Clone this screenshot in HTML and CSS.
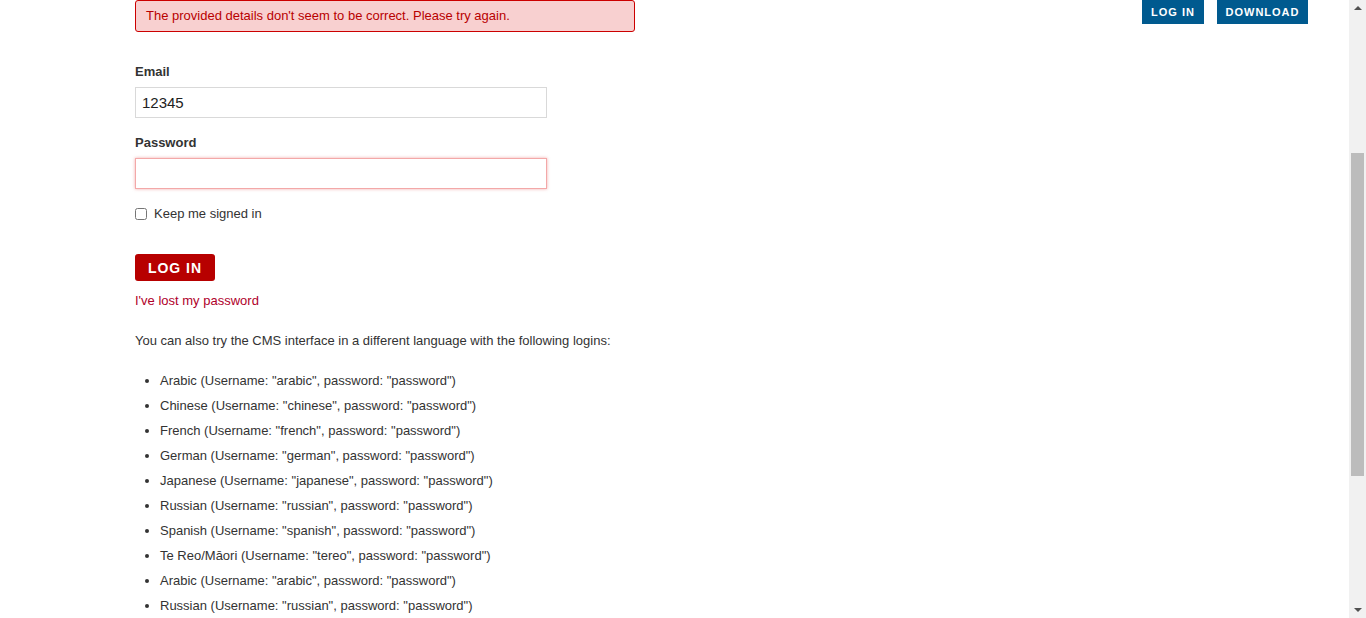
FILE: index.html
```html
<!DOCTYPE html>
<html lang="en">
<head>
<meta charset="utf-8">
<title>Log in</title>
<link rel="stylesheet" href="styles.css">
</head>
<body>
<div class="viewport">
  <div class="page">
    <main class="content">
      <div class="alert">The provided details don't seem to be correct. Please try again.</div>
      <form class="login">
        <label class="field-label" for="email">Email</label>
        <input class="text-input" id="email" type="text" value="12345">
        <label class="field-label" for="pw">Password</label>
        <input class="text-input error" id="pw" type="password">
        <label class="remember"><input type="checkbox" class="check"><span>Keep me signed in</span></label>
        <button type="button" class="submit">LOG IN</button>
        <a class="lost" href="#">I've lost my password</a>
      </form>
      <p class="intro">You can also try the CMS interface in a different language with the following logins:</p>
      <ul class="logins">
        <li>Arabic (Username: "arabic", password: "password")</li>
        <li>Chinese (Username: "chinese", password: "password")</li>
        <li>French (Username: "french", password: "password")</li>
        <li>German (Username: "german", password: "password")</li>
        <li>Japanese (Username: "japanese", password: "password")</li>
        <li>Russian (Username: "russian", password: "password")</li>
        <li>Spanish (Username: "spanish", password: "password")</li>
        <li>Te Reo/Māori (Username: "tereo", password: "password")</li>
        <li>Arabic (Username: "arabic", password: "password")</li>
        <li>Russian (Username: "russian", password: "password")</li>
      </ul>
    </main>
    <nav class="topnav">
      <a class="navbtn login-btn" href="#">LOG IN</a>
      <a class="navbtn download-btn" href="#">DOWNLOAD</a>
    </nav>
  </div>
  <div class="scrollbar">
    <span class="arrow up"></span>
    <div class="track"><div class="thumb"></div></div>
    <span class="arrow down"></span>
  </div>
</div>
</body>
</html>
```

FILE: styles.css
```css
html, body {
  margin: 0;
  padding: 0;
  height: 100%;
  overflow: hidden;
  background: #fff;
}
body {
  font-family: "Liberation Sans", Arial, sans-serif;
  font-size: 13px;
  color: #333;
}
.viewport {
  display: flex;
  height: 618px;
}
.page {
  flex: 1;
  display: flex;
  align-items: flex-start;
  overflow: hidden;
}
.content {
  margin-left: 135px;
  width: 500px;
  display: flex;
  flex-direction: column;
}
.alert {
  box-sizing: border-box;
  height: 32px;
  border: 1px solid #cc0000;
  border-radius: 3px;
  background: #f8d0d0;
  color: #b80000;
  font-size: 13px;
  line-height: 29px;
  padding: 0 10px;
}
.login {
  display: flex;
  flex-direction: column;
  align-items: flex-start;
  margin-top: 29px;
}
.field-label {
  font-weight: bold;
  line-height: 20px;
  padding-top: 1px;
  color: #333;
  margin-bottom: 5px;
}
.text-input {
  box-sizing: border-box;
  width: 412px;
  height: 31px;
  border: 1px solid #d9d9d9;
  border-radius: 0;
  padding: 0 6px;
  font-family: "Liberation Sans", Arial, sans-serif;
  font-size: 15px;
  color: #222;
  margin: 0 0 14px 0;
  outline: none;
}
.text-input.error {
  border-color: #f3a8a8;
  box-shadow: 0 0 3px rgba(230, 90, 90, 0.5);
}
.remember {
  display: flex;
  align-items: center;
  height: 20px;
  line-height: 20px;
  padding-top: 1px;
  color: #333;
}
.check {
  width: 12px;
  height: 12px;
  margin: 0 7px 0 0;
}
.submit {
  margin-top: 30px;
  height: 27px;
  width: 80px;
  padding: 0;
  border: 0;
  border-radius: 3px;
  background: #b70000;
  color: #fff;
  font-family: "Liberation Sans", Arial, sans-serif;
  font-weight: bold;
  font-size: 14px;
  letter-spacing: 1px;
}
.lost {
  margin-top: 10px;
  line-height: 20px;
  color: #b0002a;
  text-decoration: none;
}
.intro {
  margin: 20px 0 0 0;
  line-height: 20px;
  white-space: nowrap;
}
.logins {
  margin: 20px 0 0 0;
  padding-left: 25px;
}
.logins li {
  line-height: 20px;
  margin-bottom: 5px;
  white-space: nowrap;
}
.topnav {
  margin-left: auto;
  margin-right: 41px;
  display: flex;
  gap: 13px;
}
.navbtn {
  display: block;
  height: 24px;
  line-height: 24px;
  text-align: center;
  background: #005a8f;
  color: #fff;
  font-weight: bold;
  font-size: 11px;
  letter-spacing: 1px;
  text-decoration: none;
}
.login-btn {
  width: 62px;
}
.download-btn {
  width: 91px;
}
.scrollbar {
  width: 17px;
  flex: 0 0 17px;
  background: #f1f1f1;
  display: flex;
  flex-direction: column;
  align-items: center;
}
.arrow {
  width: 0;
  height: 0;
  border-left: 4px solid transparent;
  border-right: 4px solid transparent;
}
.arrow.up {
  margin-top: 6px;
  border-bottom: 4px solid #505050;
}
.arrow.down {
  margin-bottom: 6px;
  border-top: 4px solid #505050;
}
.track {
  flex: 1;
  width: 100%;
  display: flex;
  flex-direction: column;
}
.thumb {
  margin: 143px 2px 0 2px;
  height: 323px;
  background: #bcbcbc;
}
```
